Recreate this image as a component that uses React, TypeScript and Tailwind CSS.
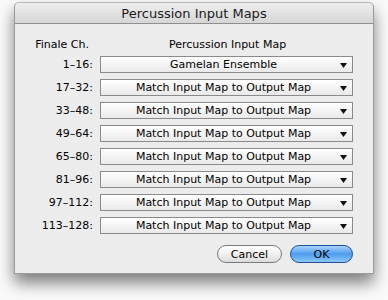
const rows = [
  ["1–16:", "Gamelan Ensemble"],
  ["17–32:", "Match Input Map to Output Map"],
  ["33–48:", "Match Input Map to Output Map"],
  ["49–64:", "Match Input Map to Output Map"],
  ["65–80:", "Match Input Map to Output Map"],
  ["81–96:", "Match Input Map to Output Map"],
  ["97–112:", "Match Input Map to Output Map"],
  ["113–128:", "Match Input Map to Output Map"],
]

const font = { fontFamily: '"Lucida Grande", "DejaVu Sans", sans-serif' }

const Popup = ({ value }: { value: string }) => {
  return (
    <div className="flex items-center h-[17px] w-[253px] border border-[#8a8a8a] bg-gradient-to-b from-[#ffffff] via-[#f4f4f4] to-[#e9e9e9] shadow-[inset_0_1px_0_#fff]">
      <span className="flex-1 text-center text-[11px] leading-none text-black pl-[6px]">{value}</span>
      <svg width="7" height="5" viewBox="0 0 7 5" className="mr-[5px] mt-[2px]">
        <path d="M0 0 H7 L3.5 5 Z" fill="#111" />
      </svg>
    </div>
  )
}

export default function App() {
  return (
    <div className="w-[388px] h-[300px] bg-[#fafafa] pt-[2px] pl-[14px]" style={font}>
      <div className="w-[360px] h-[272px] bg-[#ececec] rounded-t-[5px] border border-[#9a9a9a] border-t-[#b8b8b8] shadow-[0_9px_16px_rgba(0,0,0,0.5)] flex flex-col">
        <div className="h-[21px] rounded-t-[5px] bg-gradient-to-b from-[#eeeeee] to-[#d6d6d6] border-b border-[#8e8e8e] flex items-center justify-center">
          <span className="text-[13px] text-[#1a1a1a] leading-none">Percussion Input Maps</span>
        </div>
        <div className="flex flex-col pt-[12px]">
          <div className="flex items-center h-[16px] mb-[4px]">
            <span className="w-[74px] text-right text-[11px] text-black leading-none">Finale Ch.</span>
            <span className="ml-[12px] w-[253px] text-center text-[11px] text-black leading-none">Percussion Input Map</span>
          </div>
          <div className="flex flex-col gap-[6px]">
            {rows.map(([label, value]) => (
              <div key={label} className="flex items-center">
                <span className="w-[78px] text-right text-[11px] text-black leading-none">{label}</span>
                <div className="ml-[7px]">
                  <Popup value={value} />
                </div>
              </div>
            ))}
          </div>
          <div className="flex justify-end gap-[8px] mt-[11px] pr-[20px]">
            <button className="h-[18px] w-[65px] rounded-full border border-[#7a7a7a] bg-gradient-to-b from-[#ffffff] via-[#f0f0f0] to-[#dcdcdc] text-[11px] text-black leading-none">
              Cancel
            </button>
            <button className="h-[18px] w-[63px] rounded-full border border-[#1f4f9c] bg-gradient-to-b from-[#a9d4fb] via-[#4d9cee] to-[#8cc7fb] text-[11px] text-black leading-none">
              OK
            </button>
          </div>
        </div>
      </div>
    </div>
  )
}
